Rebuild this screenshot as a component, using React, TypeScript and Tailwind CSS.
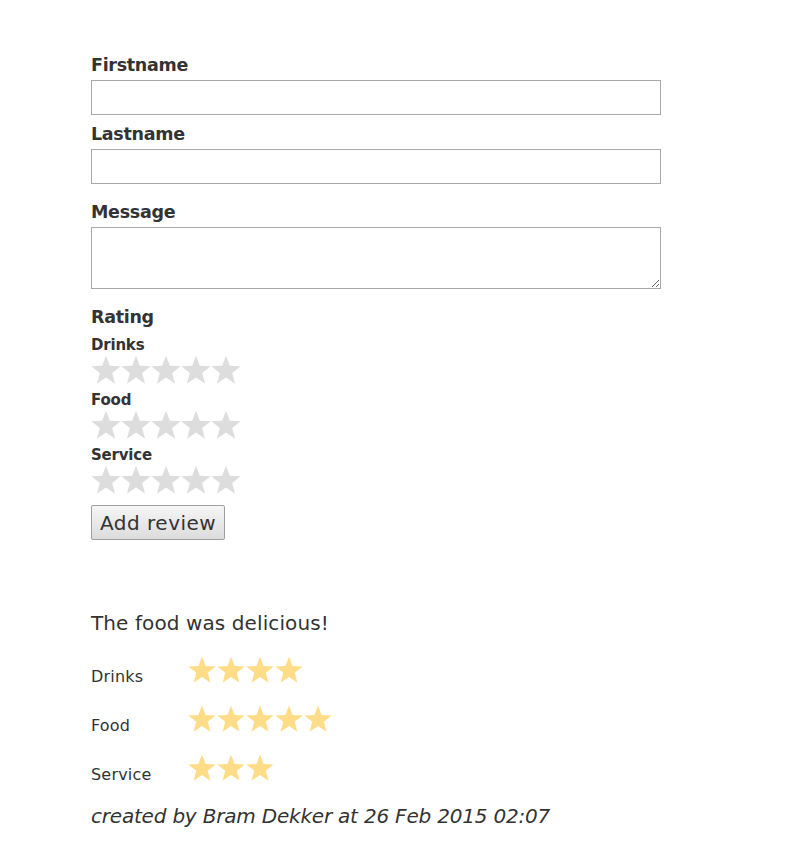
import React from "react";

const FONT = { fontFamily: '"DejaVu Sans", sans-serif' };

function Star({ size, color }: { size: number; color: string }) {
  return (
    <svg width={size} height={size} viewBox="0 0 24 24" className="block">
      <polygon
        fill={color}
        points="12,0.5 15.06,8.6 23.7,9 16.95,14.4 19.23,22.9 12,18 4.77,22.9 7.05,14.4 0.3,9 8.94,8.6"
      />
    </svg>
  );
}

function EmptyStars() {
  return (
    <div className="flex h-[30px]">
      {[0, 1, 2, 3, 4].map((i) => (
        <Star key={i} size={30} color="#dddddd" />
      ))}
    </div>
  );
}

const reviewRows = [
  { label: "Drinks", stars: 4 },
  { label: "Food", stars: 5 },
  { label: "Service", stars: 3 },
];

export default function App() {
  return (
    <div className="min-h-[860px] bg-white pl-[91px] pt-[53px] text-[#333]" style={FONT}>
      <form className="flex w-[570px] flex-col">
        <label className="h-6 text-[17.5px] font-bold leading-6 tracking-[-0.3px]">Firstname</label>
        <input className="mt-[3px] h-[35px] border border-[#a9a9a9] bg-white" />
        <label className="mt-[7px] h-6 text-[17.5px] font-bold leading-6 tracking-[-0.3px]">Lastname</label>
        <input className="mt-[3px] h-[35px] border border-[#a9a9a9] bg-white" />
        <label className="mt-4 h-6 text-[17.5px] font-bold leading-6 tracking-[-0.3px]">Message</label>
        <textarea className="mt-[3px] h-[62px] border border-[#a9a9a9] bg-white" />

        <div className="mt-[16px] h-6 text-[17.5px] font-bold leading-6 tracking-[-0.3px]">Rating</div>
        {["Drinks", "Food", "Service"].map((name, idx) => (
          <div key={name} className="flex flex-col">
            <div className={`${idx === 0 ? "mt-[6px]" : "mt-[5px]"} h-5 text-[15px] font-bold leading-5 tracking-[-0.2px]`}>
              {name}
            </div>
            <EmptyStars />
          </div>
        ))}
        <div className="mt-[10px]">
          <button
            type="button"
            className="h-[35px] rounded-[2px] border border-[#a0a0a0] bg-gradient-to-b from-[#f6f6f6] to-[#dcdcdc] px-2 text-[20px] leading-none tracking-[0.5px] text-[#333]"
            style={FONT}
          >
            Add review
          </button>
        </div>
      </form>

      <div className="mt-[71px] flex flex-col">
        <p className="h-6 text-[20px] leading-6 tracking-[0.1px]">The food was delicious!</p>
        {reviewRows.map((row) => (
          <div key={row.label} className="mt-[19px] flex h-[30px] items-end">
            <span className="w-[97px] text-[16px] leading-[14px] tracking-[0.2px]">{row.label}</span>
            <div className="flex gap-[1px]">
              {Array.from({ length: row.stars }).map((_, i) => (
                <Star key={i} size={28} color="#ffdd88" />
              ))}
            </div>
          </div>
        ))}
        <p className="mt-[22px] h-6 text-[20px] italic leading-6 tracking-[-0.2px]">
          created by Bram Dekker at 26 Feb 2015 02:07
        </p>
      </div>
    </div>
  );
}
